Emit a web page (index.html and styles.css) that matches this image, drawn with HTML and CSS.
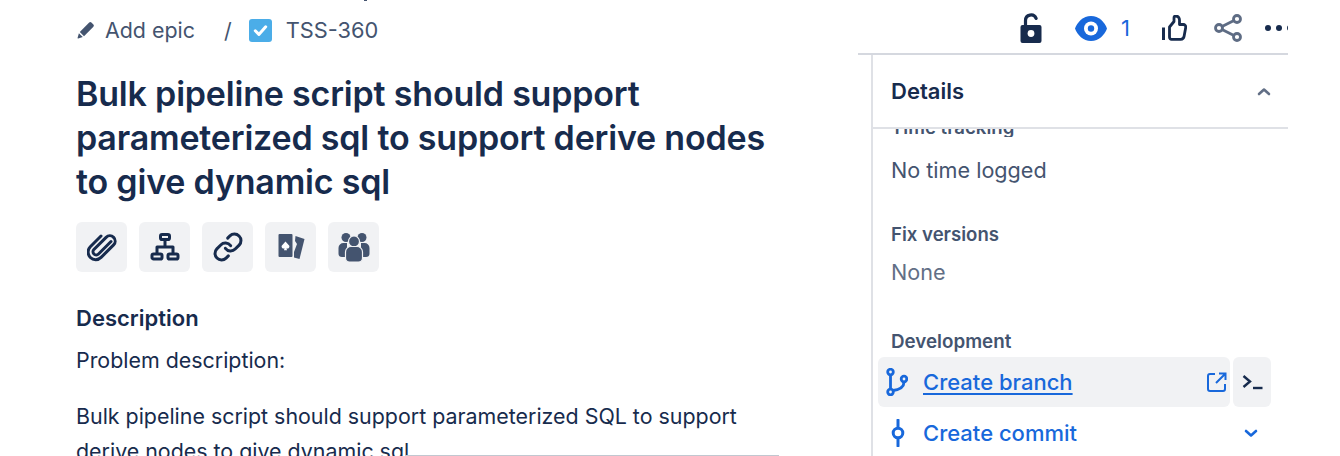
FILE: index.html
```html
<!DOCTYPE html>
<html lang="en">
<head>
<meta charset="utf-8">
<title>TSS-360</title>
<link rel="stylesheet" href="styles.css">
</head>
<body>
<div class="page">
  <main class="main">
    <span class="top-speck"></span>
    <nav class="crumbs">
      <svg class="ic-pencil" viewBox="0 0 18 18"><path d="M12.2 1.6a1.6 1.6 0 0 1 2.2 0l2 2a1.6 1.6 0 0 1 0 2.2L7 15.2l-4.2-4.2zM1.9 12.2l3.9 3.9-4.6 1.3a.5.5 0 0 1-.6-.6z" fill="#44546f"/></svg>
      <span class="crumb-text">Add epic</span>
      <span class="crumb-sep">/</span>
      <svg class="ic-check" viewBox="0 0 23 23"><rect width="23" height="23" rx="3" fill="#4bade8"/><path d="M6.3 11.8l3.6 3.6 6.8-7.6" fill="none" stroke="#fff" stroke-width="3" stroke-linecap="round" stroke-linejoin="round"/></svg>
      <span class="crumb-key">TSS-360</span>
    </nav>
    <h1 class="title">Bulk pipeline script should support parameterized sql to support derive nodes to give dynamic sql</h1>
    <div class="tools">
      <button class="tool"><svg viewBox="0 0 30 30"><path d="M24.5 8.5 12 21a3.2 3.2 0 0 1-4.6-4.5L19.6 4.4a5.3 5.3 0 0 1 7.5 7.5L14.6 24.4a7.6 7.6 0 0 1-10.8-10.7L14.5 3" transform="translate(-.5 1)" fill="none" stroke="#172b4d" stroke-width="3" stroke-linecap="round" stroke-linejoin="round"/></svg></button>
      <button class="tool"><svg viewBox="0 0 30 30"><g fill="none" stroke="#172b4d" stroke-width="3" stroke-linejoin="round"><rect x="10.5" y="2.5" width="9" height="5" rx="1.6"/><rect x="2" y="22" width="10" height="5" rx="1.6"/><rect x="18" y="22" width="10" height="5" rx="1.6"/><path d="M15 7.5V15M7 22V15H23V22"/></g></svg></button>
      <button class="tool"><svg viewBox="0.500 0.500 23 23"><g fill="none" stroke="#172b4d" stroke-width="2.300" stroke-linecap="round" stroke-linejoin="round"><path d="M10 13a5 5 0 0 0 7.540.540l3-3a5 5 0 0 0-7.070-7.070l-1.720 1.710"/><path d="M14 11a5 5 0 0 0-7.540-.540l-3 3a5 5 0 0 0 7.070 7.070l1.710-1.710"/></g></svg></button>
      <button class="tool"><svg viewBox="0 0 30 30"><path d="M19.500 4L28.500 7L23.500 27L18 25.500V20L21 12L19 9z" fill="#44546f"/><rect x="2.500" y="2" width="14" height="23" rx="1" fill="#44546f"/><path d="M9.500 9.500l3.800 4.200a2 2 0 0 1-2.800 2.500l.5 2h-3l.5-2a2 2 0 0 1-2.800-2.500z" fill="#fff"/></svg></button>
      <button class="tool"><svg viewBox="0 0 32 32"><g fill="#44546f"><circle cx="8" cy="6.500" r="4.500"/><circle cx="24" cy="6.500" r="4.500"/><path d="M.5 17a5 5 0 0 1 5-5H9v14H4A3.500 3.500 0 0 1 .5 22.500zM31.500 17a5 5 0 0 0-5-5H23v14h5a3.500 3.500 0 0 0 3.500-3.500z"/></g><g fill="#44546f" stroke="#f1f2f4" stroke-width="1.200"><circle cx="16" cy="10.500" r="5.500"/><path d="M7.500 21a5.500 5.500 0 0 1 5.500-5.500h6a5.500 5.500 0 0 1 5.500 5.500v6a4 4 0 0 1-4 4h-9a4 4 0 0 1-4-4z"/></g></svg></button>
    </div>
    <h2 class="desc-head">Description</h2>
    <p class="para first">Problem description:</p>
    <p class="para">Bulk pipeline script should support parameterized SQL to support derive nodes to give dynamic sql</p>
    <div class="editor-line"></div>
  </main>
  <aside class="side">
    <div class="actions">
      <svg class="ic-lock" viewBox="0 0 22 30"><path d="M5.500 13V7.500a5.500 5.500 0 0 1 10.600-2.100" fill="none" stroke="#172b4d" stroke-width="3.200" stroke-linecap="round"/><path d="M2.500 12h17a2 2 0 0 1 2 2v14a2 2 0 0 1-2 2h-17a2 2 0 0 1-2-2V14a2 2 0 0 1 2-2z" fill="#172b4d"/><circle cx="11" cy="20.500" r="3.400" fill="#fff"/></svg>
      <svg class="ic-eye" viewBox="0 0 32 25"><path d="M16 0c8 0 13.500 6 16 12.500C29.500 19 24 25 16 25S2.500 19 0 12.500C2.500 6 8 0 16 0z" fill="#1868db"/><circle cx="16" cy="12.500" r="7" fill="#fff"/><circle cx="16" cy="12.500" r="3.200" fill="#1868db"/></svg>
      <span class="watch-count">1</span>
      <svg class="ic-thumb" viewBox="0 0 25 26"><path d="M7.500 12 12 6.500V2.700C12 1.500 13 1 14 1c2 0 3.500 1.800 3.500 4v4.500h3.700a2.500 2.500 0 0 1 2.500 3l-1.600 8.800a3.500 3.500 0 0 1-3.400 3H9.500a2 2 0 0 1-2-2z" fill="none" stroke="#172b4d" stroke-width="2.800" stroke-linejoin="round"/><path d="M1.500 12.500V25" stroke="#172b4d" stroke-width="3" fill="none"/></svg>
      <svg class="ic-share" viewBox="0 0 28 28"><g fill="none" stroke="#5e6c84" stroke-width="2.800"><circle cx="5" cy="14" r="3.500"/><circle cx="23" cy="5" r="3.500"/><circle cx="23" cy="23" r="3.500"/><path d="M8 12.500l12-6M8 15.500l12 6"/></g></svg>
      <span class="dots"><i></i><i></i><i></i></span>
    </div>
    <section class="panel">
      <header class="panel-head">
        <h2 class="panel-title">Details</h2>
        <svg class="ic-up" viewBox="0 0 14 9"><path d="M2 7l5-4.500L12 7" fill="none" stroke="#626f86" stroke-width="2.600" stroke-linecap="round" stroke-linejoin="round"/></svg>
      </header>
      <div class="panel-body">
        <div class="clip-label"><span>Time tracking</span></div>
        <p class="value dark">No time logged</p>
        <h3 class="label">Fix versions</h3>
        <p class="value">None</p>
        <h3 class="label dev">Development</h3>
        <div class="dev-row">
          <a class="dev-link hover" href="#">
            <svg class="ic-branch" viewBox="0 0 22 28"><g fill="none" stroke="#1868db" stroke-width="2.800"><circle cx="4.500" cy="4" r="2.800"/><circle cx="4.500" cy="24" r="2.800"/><circle cx="18" cy="11" r="2.800"/><path d="M4.500 7v14M18 14c0 5-4 7.500-11 8.500"/></g></svg>
            <span class="link-text">Create branch</span>
            <svg class="ic-ext" viewBox="0 0 20 20"><path d="M8 2H3a2 2 0 0 0-2 2v13a2 2 0 0 0 2 2h13a2 2 0 0 0 2-2v-5M12 1.500h6.500V8M18 2 9 11" fill="none" stroke="#1868db" stroke-width="2"/></svg>
          </a>
          <button class="term"><svg viewBox="0 0 21 16"><path d="M1.500 2l6.500 5.500L1.500 13" fill="none" stroke="#172b4d" stroke-width="2.400"/><path d="M11 14h9.500" stroke="#172b4d" stroke-width="2.400"/></svg></button>
        </div>
        <div class="dev-link commit">
          <svg class="ic-commit" viewBox="0 0 14 28"><path d="M7 1v7.500M7 19.500V27" stroke="#1868db" stroke-width="3" stroke-linecap="round"/><circle cx="7" cy="14" r="4.800" fill="none" stroke="#1868db" stroke-width="3"/></svg>
          <span class="commit-text">Create commit</span>
          <svg class="ic-down" viewBox="0 0 14 9"><path d="M2 2l5 4.500L12 2" fill="none" stroke="#1868db" stroke-width="2.600" stroke-linecap="round" stroke-linejoin="round"/></svg>
        </div>
      </div>
    </section>
  </aside>
</div>
</body>
</html>
```
FILE: styles.css
```css
* { box-sizing: border-box; }
html, body { margin: 0; padding: 0; background: #fff; overflow: hidden; }
body { font-family: Inter, "Liberation Sans", sans-serif; color: #172b4d; height: 456px; }
h1, h2, h3, p { margin: 0; }
svg { display: block; flex: none; }

.page { display: flex; width: 1288px; height: 456px; overflow: hidden; }
.main { position: relative; width: 858px; flex: none; padding: 0 92px 0 76px; overflow: hidden; }
.top-speck { position: absolute; left: 364px; top: 0; width: 3px; height: 1px; background: #44546f; }

.crumbs { display: flex; align-items: center; height: 60px; color: #44546f; font-size: 21.4px; }
.ic-pencil { width: 18px; height: 18px; margin: 0 10px 0 1px; }
.crumb-sep { margin: 0 17px 0 29px; }
.ic-check { width: 23px; height: 23px; margin-right: 14px; }
.crumb-key { font-size: 21.8px; }

.title { margin-top: 12px; font-size: 34px; line-height: 44px; font-weight: 600; letter-spacing: -0.19px; color: #172b4d; }

.tools { display: flex; gap: 12px; margin-top: 18px; }
.tool { width: 51px; height: 50px; padding: 0; border: 0; border-radius: 6px; background: #f1f2f4; display: flex; align-items: center; justify-content: center; }
.tool svg { width: 30px; height: 30px; }
.tool:last-child svg { width: 32px; height: 32px; }

.desc-head { margin-top: 32px; font-size: 22px; line-height: 28px; font-weight: 600; }
.para { font-size: 21.4px; line-height: 35px; margin-top: 21px; }
.para.first { margin-top: 11px; }
.editor-line { position: absolute; left: 405px; width: 374px; top: 455px; height: 1px; background: #c1c7d0; }

.side { flex: 1; min-width: 0; display: flex; flex-direction: column; overflow: hidden; }
.actions { display: flex; align-items: center; height: 55px; flex: none; padding: 3px 0 0 162px; border-bottom: 2px solid #d5d8df; }
.ic-lock { width: 22px; height: 30px; }
.ic-eye { width: 32px; height: 25px; margin-left: 33px; }
.watch-count { width: 10px; margin-left: 14px; font-size: 22px; color: #1868db; }
.ic-thumb { width: 25px; height: 26px; margin-left: 32px; }
.ic-share { width: 28px; height: 28px; margin-left: 27px; }
.dots { display: flex; gap: 5px; margin-left: 23px; flex: none; }
.dots i { width: 6px; height: 6px; border-radius: 50%; background: #172b4d; }

.panel { flex: 1; margin-left: 13px; border-left: 2px solid #dfe1e6; display: flex; flex-direction: column; min-height: 0; }
.panel-head { display: flex; align-items: center; justify-content: space-between; height: 74px; flex: none; padding: 0 17px 0 18px; border-bottom: 2px solid #dfe1e6; }
.panel-title { font-size: 22px; font-weight: 600; color: #172b4d; }
.ic-up { width: 14px; height: 9px; }

.panel-body { flex: 1; min-height: 0; overflow: hidden; padding-left: 18px; }
.clip-label { height: 8px; overflow: hidden; color: #44546f; font-size: 18.6px; font-weight: 600; }
.clip-label span { display: block; margin-top: -13px; line-height: 22px; }
.value { font-size: 21.6px; line-height: 30px; color: #626f86; }
.value.dark { color: #44546f; margin-top: 18px; }
.label { font-size: 18.6px; line-height: 24px; font-weight: 600; color: #44546f; margin-top: 37px; }
.label + .value { margin-top: 11px; }
.label.dev { margin-top: 43px; font-size: 18.8px; }

.dev-row { display: flex; gap: 3px; margin: 3px 0 0 -13px; width: 393px; }
.dev-link { display: flex; align-items: center; height: 50px; color: #1868db; font-size: 22px; font-weight: 500; }
.dev-link.hover { flex: 1; background: #f1f2f4; border-radius: 6px; padding: 0 0 0 8px; text-decoration: none; }
.ic-branch { width: 22px; height: 28px; margin-right: 15px; }
.link-text { flex: 1; text-decoration: underline; text-underline-offset: 3px; }
.ic-ext { width: 20px; height: 20px; margin-right: 3px; }
.term { width: 38px; height: 50px; padding: 0; border: 0; border-radius: 6px; background: #f1f2f4; display: flex; align-items: center; justify-content: center; }
.term svg { width: 21px; height: 16px; }
.commit { margin-top: 1px; width: 367px; }
.ic-commit { width: 14px; height: 28px; margin-right: 18px; }
.commit-text { flex: 1; }
.ic-down { width: 14px; height: 9px; }
```
